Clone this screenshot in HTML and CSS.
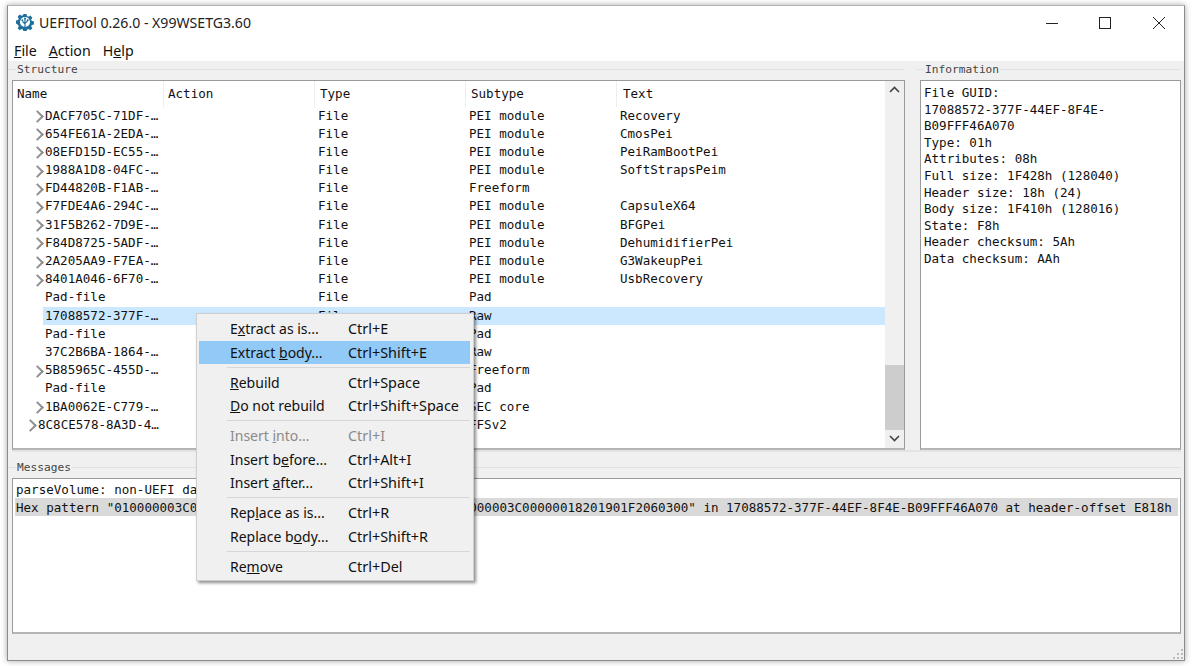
FILE: index.html
```html
<!DOCTYPE html>
<html lang="en">
<head>
<meta charset="utf-8">
<title>UEFITool 0.26.0 - X99WSETG3.60</title>
<link rel="stylesheet" href="styles.css">
</head>
<body>
<div class="window">
  <div class="titlebar">
    <svg class="appicon" viewBox="0 0 20 20">
      <path fill="#1f6f9c" d="M8.3 1h3.4l.5 2.4 1.6.7 2.1-1.3 2.3 2.4-1.3 2 .6 1.6 2.4.5v3.4l-2.4.5-.6 1.6 1.3 2.1-2.3 2.3-2.1-1.3-1.6.7-.5 2.4H8.300l-.5-2.4-1.6-.7-2.1 1.300-2.300-2.300 1.300-2.100-.7-1.600L0 11.700V8.300l2.400-.5.7-1.600-1.300-2 2.300-2.400 2.100 1.300 1.600-.7z"/>
      <circle cx="10" cy="10" r="5.600" fill="#fff"/>
      <path fill="none" stroke="#1f6f9c" stroke-width="1.300" d="M10 15.500V9M10 12 7.300 9.500M10 11.500l2.700-2.500M10 9V6.500"/>
      <circle cx="7" cy="8" r="1.100" fill="#1f6f9c"/><circle cx="13" cy="8" r="1.100" fill="#1f6f9c"/><circle cx="10" cy="6" r="1.100" fill="#1f6f9c"/>
    </svg>
    <span class="title">UEFITool 0.26.0 - X99WSETG3.60</span>
    <div class="controls">
      <svg class="ctl" viewBox="0 0 54 36"><path d="M23 19.500h12" stroke="#222" fill="none"/></svg>
      <svg class="ctl" viewBox="0 0 54 36"><rect x="22.500" y="13.500" width="11" height="11" stroke="#222" fill="none"/></svg>
      <svg class="ctl" viewBox="0 0 54 36"><path d="M22 13l12 12M34 13 22 25" stroke="#222" fill="none"/></svg>
    </div>
  </div>
  <div class="menubar">
    <span><u>F</u>ile</span><span><u>A</u>ction</span><span>H<u>e</u>lp</span>
  </div>
  <div class="content">
    <div class="toppanes">
      <section class="group structure">
        <div class="legend"><span>Structure</span></div>
        <div class="box treebox">
          <div class="tree">
            <div class="head"><div>Name</div><div>Action</div><div>Type</div><div>Subtype</div><div>Text</div></div>
            <div class="row exp"><div class="name">DACF705C-71DF-…</div><div></div><div>File</div><div>PEI module</div><div>Recovery</div></div>
            <div class="row exp"><div class="name">654FE61A-2EDA-…</div><div></div><div>File</div><div>PEI module</div><div>CmosPei</div></div>
            <div class="row exp"><div class="name">08EFD15D-EC55-…</div><div></div><div>File</div><div>PEI module</div><div>PeiRamBootPei</div></div>
            <div class="row exp"><div class="name">1988A1D8-04FC-…</div><div></div><div>File</div><div>PEI module</div><div>SoftStrapsPeim</div></div>
            <div class="row exp"><div class="name">FD44820B-F1AB-…</div><div></div><div>File</div><div>Freeform</div><div></div></div>
            <div class="row exp"><div class="name">F7FDE4A6-294C-…</div><div></div><div>File</div><div>PEI module</div><div>CapsuleX64</div></div>
            <div class="row exp"><div class="name">31F5B262-7D9E-…</div><div></div><div>File</div><div>PEI module</div><div>BFGPei</div></div>
            <div class="row exp"><div class="name">F84D8725-5ADF-…</div><div></div><div>File</div><div>PEI module</div><div>DehumidifierPei</div></div>
            <div class="row exp"><div class="name">2A205AA9-F7EA-…</div><div></div><div>File</div><div>PEI module</div><div>G3WakeupPei</div></div>
            <div class="row exp"><div class="name">8401A046-6F70-…</div><div></div><div>File</div><div>PEI module</div><div>UsbRecovery</div></div>
            <div class="row"><div class="name">Pad-file</div><div></div><div>File</div><div>Pad</div><div></div></div>
            <div class="row sel"><div class="name">17088572-377F-…</div><div></div><div>File</div><div>Raw</div><div></div></div>
            <div class="row"><div class="name">Pad-file</div><div></div><div>File</div><div>Pad</div><div></div></div>
            <div class="row"><div class="name">37C2B6BA-1864-…</div><div></div><div>File</div><div>Raw</div><div></div></div>
            <div class="row exp"><div class="name">5B85965C-455D-…</div><div></div><div>File</div><div>Freeform</div><div></div></div>
            <div class="row"><div class="name">Pad-file</div><div></div><div>File</div><div>Pad</div><div></div></div>
            <div class="row exp"><div class="name">1BA0062E-C779-…</div><div></div><div>File</div><div>SEC core</div><div></div></div>
            <div class="row exp top"><div class="name">8C8CE578-8A3D-4…</div><div></div><div>Volume</div><div>FFSv2</div><div></div></div>
          </div>
          <div class="scrollbar">
            <svg class="arrow" viewBox="0 0 19 17"><path d="M5 11l4.500-4.500L14 11" fill="none" stroke="#444" stroke-width="1.600"/></svg>
            <div class="track"><div class="thumb"></div></div>
            <svg class="arrow end" viewBox="0 0 19 18"><path d="M5 6l4.500 4.500L14 6" fill="none" stroke="#444" stroke-width="1.600"/></svg>
          </div>
        </div>
      </section>
      <section class="group info">
        <div class="legend"><span>Information</span></div>
        <div class="box infobox">File GUID:
17088572-377F-44EF-8F4E-
B09FFF46A070
Type: 01h
Attributes: 08h
Full size: 1F428h (128040)
Header size: 18h (24)
Body size: 1F410h (128016)
State: F8h
Header checksum: 5Ah
Data checksum: AAh</div>
      </section>
    </div>
    <section class="group messages">
      <div class="legend"><span>Messages</span></div>
      <div class="box msgbox">
        <div class="msg">parseVolume: non-UEFI data found in volume's free space</div>
        <div class="msg hl">Hex pattern "010000003C00000018201901F2060300000000000000010000003C00000018201901F2060300" in 17088572-377F-44EF-8F4E-B09FFF46A070 at header-offset E818h</div>
      </div>
    </section>
  </div>
  <div class="statusbar">
    <svg class="grip" viewBox="0 0 10 10"><path fill="#bbb" d="M8 0h2v2H8zM8 4h2v2H8zM4 4h2v2H4zM8 8h2v2H8zM4 8h2v2H4zM0 8h2v2H0z"/></svg>
  </div>
  <div class="ctxmenu">
    <div class="item"><span class="lbl">E<u>x</u>tract as is...</span><span class="key">Ctrl+E</span></div>
    <div class="item active"><span class="lbl">Extract <u>b</u>ody...</span><span class="key">Ctrl+Shift+E</span></div>
    <div class="sep"></div>
    <div class="item"><span class="lbl"><u>R</u>ebuild</span><span class="key">Ctrl+Space</span></div>
    <div class="item"><span class="lbl"><u>D</u>o not rebuild</span><span class="key">Ctrl+Shift+Space</span></div>
    <div class="sep"></div>
    <div class="item off"><span class="lbl">Insert <u>i</u>nto...</span><span class="key">Ctrl+I</span></div>
    <div class="item"><span class="lbl">Insert b<u>e</u>fore...</span><span class="key">Ctrl+Alt+I</span></div>
    <div class="item"><span class="lbl">Insert <u>a</u>fter...</span><span class="key">Ctrl+Shift+I</span></div>
    <div class="sep"></div>
    <div class="item"><span class="lbl">Rep<u>l</u>ace as is...</span><span class="key">Ctrl+R</span></div>
    <div class="item"><span class="lbl">Replace b<u>o</u>dy...</span><span class="key">Ctrl+Shift+R</span></div>
    <div class="sep"></div>
    <div class="item"><span class="lbl">Re<u>m</u>ove</span><span class="key">Ctrl+Del</span></div>
  </div>
</div>
</body>
</html>
```
FILE: styles.css
```css
* { box-sizing: border-box; }
html, body { margin: 0; height: 100%; background: #fff; overflow: hidden; }
body { padding: 5px 6px 5px 7px; }

.window {
  position: relative;
  width: 1178px;
  height: 656px;
  display: flex;
  flex-direction: column;
  background: #fff;
  border: 1px solid #8c8c8c;
  border-top-color: #b4b4b4;
  box-shadow: 0 0 6px rgba(0,0,0,.35);
  font-family: "Noto Sans", "Open Sans", sans-serif;
  color: #111;
}

.titlebar { height: 32px; display: flex; align-items: center; padding-left: 8px; flex: none; }
.appicon { width: 18px; height: 18px; margin-right: 5px; }
.title { font-size: 14.100px; color: #222; }
.controls { margin-left: auto; margin-right: -1px; display: flex; }
.ctl { width: 54px; height: 36px; display: block; }

.menubar { height: 23px; flex: none; display: flex; gap: 12px; padding: 2px 0 0 6px; font-size: 14.200px; line-height: 22px; }

.content { flex: 1; background: #f0f0f0; padding: 0 3px 0 4px; display: flex; flex-direction: column; font-family: "DejaVu Sans Mono", monospace; font-size: 12.560px; }

.toppanes { display: flex; height: 391px; flex: none; gap: 14px; border-bottom: 2px solid #e3e3e3; }
.group { display: flex; flex-direction: column; }
.legend { height: 19px; flex: none; position: relative; display: flex; align-items: flex-start; color: #444; line-height: 15px; padding: 1px 0 0 4px; }
.legend::before { content: ""; position: absolute; left: -4px; right: 0; top: 8px; border-top: 1px solid #e2e2e2; }
.legend span { position: relative; background: #f0f0f0; padding: 0 1px; font-size: 11.200px; }

.structure { width: 893px; }
.info { width: 261px; margin-left: 1px; }
.box { border: 1px solid #9a9a9a; border-bottom: 2px solid #b5b5b5; background: #fff; }
.treebox { height: 370px; display: flex; }
.tree { flex: 1; min-width: 0; overflow: hidden; }

.head, .row { display: grid; grid-template-columns: 151px 151px 151px 151px 1fr; }
.head { height: 25.500px; line-height: 25px; }
.head > div { padding-left: 4px; border-right: 1px solid #eee; }
.head > div:nth-child(3), .head > div:nth-child(4) { padding-left: 5px; }
.head > div:last-child { padding-left: 6px; border-right: 0; }

.row { height: 18.200px; line-height: 18.200px; color: #111; }
.row > div { padding-left: 3px; white-space: nowrap; overflow: hidden; }
.row > .name { padding-left: 32px; position: relative; overflow: visible; }
.row.top > .name { padding-left: 25px; }
.row.exp > .name::before {
  content: ""; position: absolute; left: 20px; top: 5.500px; width: 7px; height: 7px;
  border-top: 2px solid #8f8f8f; border-right: 2px solid #8f8f8f; transform: rotate(45deg);
}
.row.top > .name::before { left: 13px; }
.row.sel { background: linear-gradient(#cce8ff, #cce8ff) 30px 0 no-repeat; background-size: 100% 100%; }

.scrollbar { width: 19px; flex: none; background: #f0f0f0; display: flex; flex-direction: column; }
.arrow { width: 19px; height: 17px; flex: none; display: block; }
.arrow.end { height: 18px; }
.track { flex: 1; display: flex; flex-direction: column; justify-content: flex-end; }
.thumb { height: 65px; background: #cdcdcd; }

.infobox { height: 370px; padding: 4px 3px; line-height: 16.600px; white-space: pre-wrap; }

.messages { height: 182px; flex: none; }
.messages .legend { height: 26px; padding-top: 8px; }
.messages .legend::before { top: 15px; }
.msgbox { height: 156px; padding: 1px 2px; }
.msg { height: 18px; line-height: 19px; padding-left: 1px; white-space: nowrap; overflow: hidden; }
.msg.hl { background: #d9d9d9; }

.statusbar { height: 25px; flex: none; background: #f0f0f0; position: relative; }
.grip { position: absolute; right: 1px; bottom: 1px; width: 10px; height: 10px; }

.ctxmenu {
  position: absolute; left: 188px; top: 307px; width: 278px; height: 268px;
  background: #f0f0f0; border: 1px solid #cfcfcf; box-shadow: 2px 2px 3px rgba(0,0,0,.45);
  padding: 3px 2px; font-size: 14px; color: #111; z-index: 5;
}
.item { height: 23.500px; line-height: 23px; display: flex; padding-left: 31px; white-space: nowrap; margin-right: 1px; }
.item .lbl { width: 118px; flex: none; }
.item .key { font-size: 14.400px; }
.item.active { background: #91c9f7; }
.item.off { color: #8a8a8a; }
.sep { height: 6.500px; margin: 0 1px 0 28px; padding-top: 2.500px; }
.sep::after { content: ""; display: block; border-top: 1px solid #d7d7d7; }
```
